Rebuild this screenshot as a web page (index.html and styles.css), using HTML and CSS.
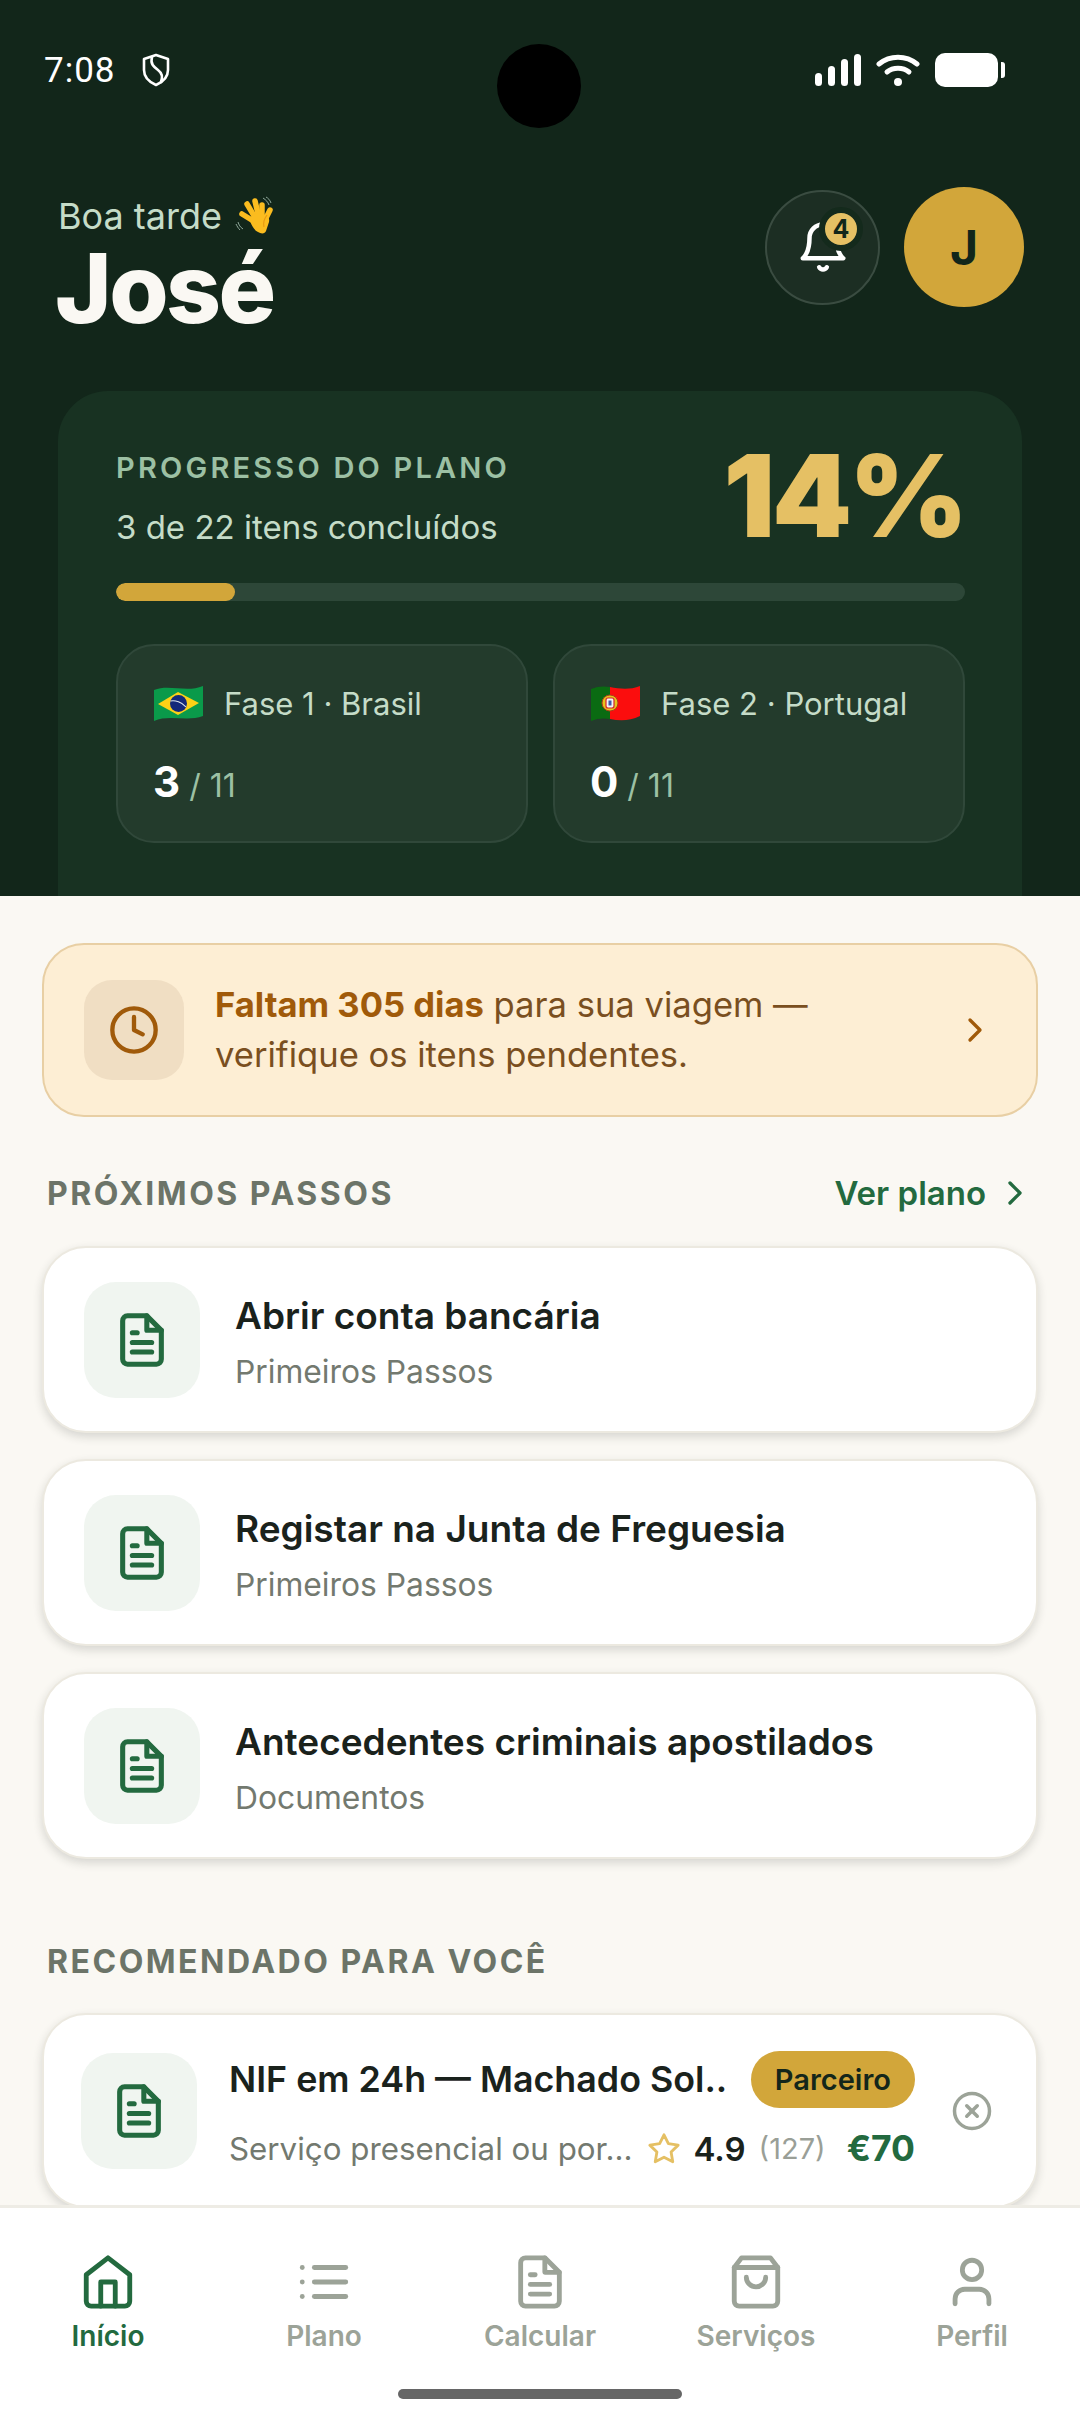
FILE: index.html
```html
<!DOCTYPE html>
<html>
    <head>
        <meta charset="utf-8">
        <link rel="stylesheet" href="styles.css">
    </head>
    <body>
        <div class="app">
            <header class="top">
                <div class="camera"></div>
                <div class="statusbar">
                    <div class="status-left">
                        <span class="clock">7:08</span>
                        <svg class="shield" viewBox="0 0 30 34" fill="none" stroke="#fff" stroke-width="2.6" stroke-linejoin="round" stroke-linecap="round">
                            <path d="M15 2 L27 6 V17 C27 24 22 29 15 32 C8 29 3 24 3 17 V6 Z"/>
                            <path d="M11 4 C9 11 13 14 17 17 C21 20 22 24 20 29"/>
                        </svg>
                    </div>
                    <div class="status-right">
                        <svg class="signal" viewBox="0 0 46 32" fill="#fff">
                            <rect x="0" y="19" width="7" height="13" rx="3.5"/>
                            <rect x="13" y="12" width="7" height="20" rx="3.5"/>
                            <rect x="26" y="5" width="7" height="27" rx="3.5"/>
                            <rect x="39" y="0" width="7" height="32" rx="3.5"/>
                        </svg>
                        <svg class="wifi" viewBox="0 0 44 32" fill="none" stroke="#fff" stroke-width="5" stroke-linecap="round">
                            <path d="M3 10 C14 1 30 1 41 10"/>
                            <path d="M11 18 C17 13 27 13 33 18"/>
                            <circle cx="22" cy="28" r="4" fill="#fff" stroke="none"/>
                        </svg>
                        <div class="battery"><span class="battery-nub"></span></div>
                    </div>
                </div>

                <div class="hello">
                    <div class="hello-text">
                        <div class="greet">Boa tarde
                            <svg class="wave" viewBox="8 5 44 44">
                                <g fill="none" stroke="#fbbc1f" stroke-width="5.5" stroke-linecap="round">
                                    <path d="M30 33 L17 25"/>
                                    <path d="M31 30 L22 15"/>
                                    <path d="M34 29 L30 12"/>
                                    <path d="M37 29 L37 16"/>
                                    <path d="M39 33 L45 21"/>
                                </g>
                                <path fill="#fbbc1f" d="M25 32 C24 27 30 24 37 25 C42 26 45 28 44 33 L41 42 C40 45 36 45 33 43 C29 41 27 37 25 32 Z"/>
                                <path fill="none" stroke="#e89a12" stroke-width="1.2" d="M42 26 C39 30 38 34 39 38"/>
                                <path fill="none" stroke="#8fa89a" stroke-width="1" d="M38 9 C41 11 43 13 44 16 M41 8 C43 9 45 11 46 14 M13 33 C14 36 15 38 18 40 M11 35 C12 37 13 39 15 41"/>
                            </svg>
                        </div>
                        <div class="name">José</div>
                    </div>
                    <div class="hello-actions">
                        <div class="bell-btn">
                            <svg class="ico bell-ico" viewBox="0 0 24 24" stroke="#fff">
                                <path d="M6 8a6 6 0 0 1 12 0c0 7 3 9 3 9H3s3-2 3-9"/>
                                <path d="M10.3 21a1.94 1.94 0 0 0 3.4 0"/>
                            </svg>
                            <span class="badge">4</span>
                        </div>
                        <div class="avatar">J</div>
                    </div>
                </div>

                <section class="progress-card">
                    <div class="progress-head">
                        <div>
                            <div class="progress-label">PROGRESSO DO PLANO</div>
                            <div class="progress-sub">3 de 22 itens concluídos</div>
                        </div>
                        <div class="progress-pct">14%</div>
                    </div>
                    <div class="bar"><div class="bar-fill" style="width:14%"></div></div>
                    <div class="phases">
                        <div class="phase">
                            <div class="phase-title">
                                <svg class="flag" viewBox="0 0 51 36">
                                    <path fill="#0a9a4a" d="M1 5 C16 -1 34 8 50 1 V31 C34 37 16 29 1 36 Z"/>
                                    <path fill="#fcd116" d="M25 7 L46 18 L25 30 L5 19 Z"/>
                                    <circle cx="25.5" cy="18.5" r="8.5" fill="#14297a"/>
                                    <path fill="none" stroke="#dfe8ef" stroke-width="1.2" d="M17.5 16 C22 15 29 17 33 22"/>
                                </svg>
                                <span>Fase 1 · Brasil</span>
                            </div>
                            <div class="phase-count"><b>3</b> / 11</div>
                        </div>
                        <div class="phase">
                            <div class="phase-title">
                                <svg class="flag" viewBox="0 0 51 36">
                                    <path fill="#0a6b12" d="M1 4 C8 1 14 1 20 2 V34 C14 33 8 33 1 36 Z"/>
                                    <path fill="#fb0d0d" d="M20 2 C30 4 40 5 50 1 V31 C40 36 30 36 20 34 Z"/>
                                    <circle cx="20" cy="18" r="8" fill="#e4c51d" stroke="#b03a1a" stroke-width="1"/>
                                    <rect x="16" y="13" width="8" height="10" rx="2" fill="#f4f4f4" stroke="#d8202a" stroke-width="1.2"/>
                                    <rect x="18.5" y="15.5" width="3" height="5" fill="#3d58a8"/>
                                </svg>
                                <span>Fase 2 · Portugal</span>
                            </div>
                            <div class="phase-count"><b>0</b> / 11</div>
                        </div>
                    </div>
                </section>
            </header>

            <main class="content">
                <div class="alert">
                    <div class="alert-icon">
                        <svg class="ico clock-ico" viewBox="0 0 24 24" stroke="#a05a0a">
                            <circle cx="12" cy="12" r="10"/>
                            <polyline points="12 6 12 12 16 14"/>
                        </svg>
                    </div>
                    <p class="alert-text"><b>Faltam 305 dias</b> para sua viagem — verifique os itens pendentes.</p>
                    <svg class="ico chev" viewBox="0 0 24 24" stroke="#a05a0a"><polyline points="9 18 15 12 9 6"/></svg>
                </div>

                <div class="section-head">
                    <h2>PRÓXIMOS PASSOS</h2>
                    <a class="see-all">Ver plano
                        <svg class="ico chev" viewBox="0 0 24 24" stroke="#236a3f"><polyline points="9 18 15 12 9 6"/></svg>
                    </a>
                </div>

                <div class="steps">
                    <div class="card">
                        <div class="card-icon">
                            <svg class="ico doc-ico" viewBox="0 0 24 24" stroke="#236a3f">
                                <path d="M14 2H6a2 2 0 0 0-2 2v16a2 2 0 0 0 2 2h12a2 2 0 0 0 2-2V8z"/>
                                <path d="M14 2v6h6"/><path d="M16 13H8"/><path d="M16 17H8"/><path d="M10 9H8"/>
                            </svg>
                        </div>
                        <div class="card-text">
                            <div class="card-title">Abrir conta bancária</div>
                            <div class="card-sub">Primeiros Passos</div>
                        </div>
                    </div>
                    <div class="card">
                        <div class="card-icon">
                            <svg class="ico doc-ico" viewBox="0 0 24 24" stroke="#236a3f">
                                <path d="M14 2H6a2 2 0 0 0-2 2v16a2 2 0 0 0 2 2h12a2 2 0 0 0 2-2V8z"/>
                                <path d="M14 2v6h6"/><path d="M16 13H8"/><path d="M16 17H8"/><path d="M10 9H8"/>
                            </svg>
                        </div>
                        <div class="card-text">
                            <div class="card-title">Registar na Junta de Freguesia</div>
                            <div class="card-sub">Primeiros Passos</div>
                        </div>
                    </div>
                    <div class="card">
                        <div class="card-icon">
                            <svg class="ico doc-ico" viewBox="0 0 24 24" stroke="#236a3f">
                                <path d="M14 2H6a2 2 0 0 0-2 2v16a2 2 0 0 0 2 2h12a2 2 0 0 0 2-2V8z"/>
                                <path d="M14 2v6h6"/><path d="M16 13H8"/><path d="M16 17H8"/><path d="M10 9H8"/>
                            </svg>
                        </div>
                        <div class="card-text">
                            <div class="card-title">Antecedentes criminais apostilados</div>
                            <div class="card-sub">Documentos</div>
                        </div>
                    </div>
                </div>

                <div class="section-head section-two">
                    <h2>RECOMENDADO PARA VOCÊ</h2>
                </div>

                <div class="card rec">
                    <div class="card-icon">
                        <svg class="ico doc-ico" viewBox="0 0 24 24" stroke="#236a3f">
                            <path d="M14 2H6a2 2 0 0 0-2 2v16a2 2 0 0 0 2 2h12a2 2 0 0 0 2-2V8z"/>
                            <path d="M14 2v6h6"/><path d="M16 13H8"/><path d="M16 17H8"/><path d="M10 9H8"/>
                        </svg>
                    </div>
                    <div class="rec-body">
                        <div class="rec-top">
                            <div class="rec-title">NIF em 24h — Machado Sol..</div>
                            <span class="pill">Parceiro</span>
                        </div>
                        <div class="rec-bottom">
                            <span class="rec-sub">Serviço presencial ou por...</span>
                            <svg class="ico star" viewBox="0 0 24 24" stroke="#e5c064">
                                <polygon points="12 2 15.09 8.26 22 9.27 17 14.14 18.18 21.02 12 17.77 5.82 21.02 7 14.14 2 9.27 8.91 8.26 12 2"/>
                            </svg>
                            <span class="rate">4.9</span>
                            <span class="votes">(127)</span>
                            <span class="price">€70</span>
                        </div>
                    </div>
                    <svg class="ico close" viewBox="0 0 24 24" stroke="#9ca398">
                        <circle cx="12" cy="12" r="10"/>
                        <path d="m15 9-6 6"/><path d="m9 9 6 6"/>
                    </svg>
                </div>
            </main>

            <nav class="tabs">
                <div class="tab-row">
                    <div class="tab active">
                        <svg class="ico" viewBox="0 0 24 24" stroke="#236a3f">
                            <path d="m3 9 9-7 9 7v11a2 2 0 0 1-2 2H5a2 2 0 0 1-2-2z"/>
                            <polyline points="9 22 9 12 15 12 15 22"/>
                        </svg>
                        <span>Início</span>
                    </div>
                    <div class="tab">
                        <svg class="ico" viewBox="0 0 24 24" stroke="#9ca398">
                            <path d="M8 6h13"/><path d="M8 12h13"/><path d="M8 18h13"/>
                            <path d="M3 6h.01"/><path d="M3 12h.01"/><path d="M3 18h.01"/>
                        </svg>
                        <span>Plano</span>
                    </div>
                    <div class="tab">
                        <svg class="ico" viewBox="0 0 24 24" stroke="#9ca398">
                            <path d="M14 2H6a2 2 0 0 0-2 2v16a2 2 0 0 0 2 2h12a2 2 0 0 0 2-2V8z"/>
                            <path d="M14 2v6h6"/><path d="M16 13H8"/><path d="M16 17H8"/><path d="M10 9H8"/>
                        </svg>
                        <span>Calcular</span>
                    </div>
                    <div class="tab">
                        <svg class="ico" viewBox="0 0 24 24" stroke="#9ca398">
                            <path d="M6 2 3 6v14a2 2 0 0 0 2 2h14a2 2 0 0 0 2-2V6l-3-4Z"/>
                            <path d="M3 6h18"/><path d="M16 10a4 4 0 0 1-8 0"/>
                        </svg>
                        <span>Serviços</span>
                    </div>
                    <div class="tab">
                        <svg class="ico" viewBox="0 0 24 24" stroke="#9ca398">
                            <path d="M19 21v-2a4 4 0 0 0-4-4H9a4 4 0 0 0-4 4v2"/>
                            <circle cx="12" cy="7" r="4"/>
                        </svg>
                        <span>Perfil</span>
                    </div>
                </div>
                <div class="home-bar"></div>
            </nav>
        </div>
    </body>
</html>
```

FILE: styles.css
```css
*{
    box-sizing:border-box;
}

body{
    margin:0;
    background-color:#faf8f3;
    font-family:"Inter","Liberation Sans",sans-serif;
}

.app{
    width:1080px;
    height:2424px;
    display:flex;
    flex-direction:column;
    overflow:hidden;
}

.ico{
    fill:none;
    stroke-width:2;
    stroke-linecap:round;
    stroke-linejoin:round;
    flex:none;
}

/* dark header */
.top{
    position:relative;
    height:896px;
    flex:none;
    overflow:hidden;
    background-color:#12261a;
    padding:0 58px;
}

.camera{
    position:absolute;
    left:497px;
    top:44px;
    width:84px;
    height:84px;
    border-radius:50%;
    background-color:#000;
}

.statusbar{
    height:187px;
    margin:0 -14px;
    padding-top:53px;
    display:flex;
    justify-content:space-between;
    align-items:flex-start;
}

.status-left{
    display:flex;
    align-items:center;
    gap:25px;
    height:34px;
}

.clock{
    font-family:"Roboto",sans-serif;
    font-size:35px;
    letter-spacing:1px;
    color:#fff;
}

.shield{
    width:30px;
    height:34px;
}

.status-right{
    display:flex;
    align-items:center;
    margin-right:31px;
    height:34px;
}

.signal{
    width:46px;
    height:32px;
    margin-right:15px;
}

.wifi{
    width:44px;
    height:32px;
    margin-right:15px;
}

.battery{
    position:relative;
    width:63px;
    height:34px;
    border-radius:10px;
    background-color:#fff;
    margin-right:7px;
}

.battery-nub{
    position:absolute;
    left:66px;
    top:9px;
    width:4px;
    height:16px;
    border-radius:0 3px 3px 0;
    background-color:#fff;
}

.hello{
    display:flex;
    justify-content:space-between;
    align-items:flex-start;
    height:149px;
    margin-right:-2px;
}

.hello-text{
    padding-top:7px;
}

.greet{
    display:flex;
    align-items:center;
    gap:11px;
    height:44px;
    font-size:36px;
    color:#c5dcc8;
}

.wave{
    width:44px;
    height:44px;
}

.name{
    margin:2px 0 0 -3px;
    font-size:96px;
    line-height:96px;
    font-weight:800;
    letter-spacing:-2.5px;
    color:#faf8f3;
}

.hello-actions{
    display:flex;
    align-items:center;
    gap:24px;
}

.bell-btn{
    position:relative;
    width:115px;
    height:115px;
    border-radius:50%;
    background-color:#1c2e23;
    border:2px solid #3a4c41;
    display:flex;
    align-items:center;
    justify-content:center;
}

.bell-ico{
    width:54px;
    height:54px;
}

.badge{
    position:absolute;
    left:52px;
    top:15px;
    width:44px;
    height:44px;
    border-radius:50%;
    border:6px solid #142a1c;
    background-color:#e5c064;
    color:#12261a;
    font-size:25px;
    font-weight:700;
    display:flex;
    align-items:center;
    justify-content:center;
}

.avatar{
    width:120px;
    height:120px;
    border-radius:50%;
    background-color:#d2a63a;
    color:#12261a;
    font-size:48px;
    font-weight:700;
    display:flex;
    align-items:center;
    justify-content:center;
}

/* progress card */
.progress-card{
    margin-top:55px;
    height:560px;
    border-radius:50px;
    background-color:#183222;
    padding:59px 57px 0 58px;
}

.progress-head{
    display:flex;
    justify-content:space-between;
    align-items:flex-start;
}

.progress-label{
    font-size:29px;
    line-height:36px;
    font-weight:600;
    letter-spacing:3.2px;
    color:#9cc0a4;
}

.progress-sub{
    margin-top:19px;
    font-size:33px;
    line-height:44px;
    color:#c5dcc8;
}

.progress-pct{
    margin-top:-4px;
    font-size:114px;
    line-height:100px;
    font-weight:900;
    letter-spacing:-3px;
    color:#e5c064;
}

.bar{
    margin-top:34px;
    height:18px;
    border-radius:9px;
    background-color:#2d4738;
    overflow:hidden;
}

.bar-fill{
    height:100%;
    border-radius:9px;
    background-color:#d2a63a;
}

.phases{
    margin-top:43px;
    display:grid;
    grid-template-columns:1fr 1fr;
    gap:25px;
}

.phase{
    height:199px;
    border-radius:38px;
    background-color:#233b2c;
    border:2px solid #30483a;
    padding:39px 20px 0 35px;
}

.phase-title{
    display:flex;
    align-items:center;
    gap:20px;
    height:36px;
    font-size:31px;
    color:#c5dcc8;
}

.flag{
    width:51px;
    height:36px;
    flex:none;
}

.phase-count{
    margin-top:36px;
    line-height:50px;
    font-size:32px;
    color:#9cc0a4;
}

.phase-count b{
    font-size:42px;
    font-weight:700;
    color:#fff;
}

/* scrolling part */
.content{
    flex:1;
    min-height:0;
    overflow:hidden;
    padding:47px 42px 0;
}

.alert{
    height:174px;
    border-radius:42px;
    background-color:#fdeed4;
    border:2px solid #e8cfa4;
    padding:0 41px 0 40px;
    display:flex;
    align-items:center;
}

.alert-icon{
    width:100px;
    height:100px;
    flex:none;
    border-radius:28px;
    background-color:#f0dec3;
    display:flex;
    align-items:center;
    justify-content:center;
}

.clock-ico{
    width:52px;
    height:52px;
}

.alert-text{
    flex:1;
    margin:-2px 60px 0 31px;
    font-size:34.6px;
    line-height:50px;
    color:#7a4f1f;
}

.alert-text b{
    font-weight:700;
    color:#a05a0a;
}

.chev{
    width:40px;
    height:40px;
}

.section-head{
    margin-top:56px;
    height:40px;
    display:flex;
    justify-content:space-between;
    align-items:center;
    padding-left:5px;
}

.section-head h2{
    margin:0;
    font-size:32px;
    font-weight:700;
    letter-spacing:2.5px;
    color:#6c7468;
}

.section-two{
    margin-top:82px;
}

.see-all{
    display:flex;
    align-items:center;
    gap:9px;
    margin-right:3px;
    font-size:33px;
    font-weight:600;
    color:#236a3f;
}

.steps{
    margin-top:33px;
    display:flex;
    flex-direction:column;
    gap:26px;
}

.card{
    height:187px;
    background-color:#fff;
    border:2px solid #ece9e0;
    border-radius:44px;
    box-shadow:0 4px 10px rgba(30,40,30,0.16);
    padding:0 40px;
    display:flex;
    align-items:center;
    gap:35px;
}

.card-icon{
    width:116px;
    height:116px;
    flex:none;
    border-radius:32px;
    background-color:#f0f5f0;
    display:flex;
    align-items:center;
    justify-content:center;
}

.doc-ico{
    width:58px;
    height:58px;
    stroke-width:2.1;
}

.card-text{
    padding-top:4px;
}

.card-title{
    font-size:37px;
    line-height:48px;
    font-weight:600;
    color:#1a221c;
}

.card-sub{
    margin-top:12px;
    font-size:31.8px;
    line-height:40px;
    color:#73796f;
}

.rec{
    margin-top:32px;
    height:195px;
    padding:0 43px 0 37px;
    gap:32px;
}

.rec-body{
    flex:1;
    min-width:0;
}

.rec-top{
    display:flex;
    align-items:center;
    justify-content:space-between;
    height:57px;
}

.rec-title{
    font-size:35.8px;
    font-weight:600;
    white-space:nowrap;
    color:#1a221c;
}

.pill{
    height:57px;
    padding:0 24px;
    border-radius:29px;
    background-color:#d2a63a;
    color:#14261a;
    font-size:29px;
    font-weight:600;
    display:flex;
    align-items:center;
}

.rec-bottom{
    margin-top:19px;
    height:44px;
    display:flex;
    align-items:center;
    white-space:nowrap;
}

.rec-sub{
    width:422px;
    font-size:31.3px;
    color:#73796f;
}

.star{
    width:34px;
    height:34px;
    margin-right:12px;
}

.rate{
    font-size:33px;
    font-weight:600;
    color:#1a221c;
}

.votes{
    margin-left:13px;
    font-size:29px;
    color:#9a9f97;
}

.price{
    margin-left:21px;
    font-size:35.5px;
    font-weight:700;
    color:#236a3f;
}

.close{
    width:42px;
    height:42px;
    margin-left:4px;
}

/* bottom tabs */
.tabs{
    height:219px;
    flex:none;
    background-color:#fff;
    border-top:3px solid #eeece5;
    display:flex;
    flex-direction:column;
    align-items:center;
}

.tab-row{
    width:100%;
    display:grid;
    grid-template-columns:repeat(5,1fr);
    padding-top:45px;
}

.tab{
    display:flex;
    flex-direction:column;
    align-items:center;
    gap:8px;
    font-size:28px;
    font-weight:600;
    color:#9ca398;
}

.tab .ico{
    width:58px;
    height:58px;
}

.tab.active{
    color:#236a3f;
}

.home-bar{
    margin-top:36px;
    width:284px;
    height:10px;
    border-radius:5px;
    background-color:#666;
}
```
